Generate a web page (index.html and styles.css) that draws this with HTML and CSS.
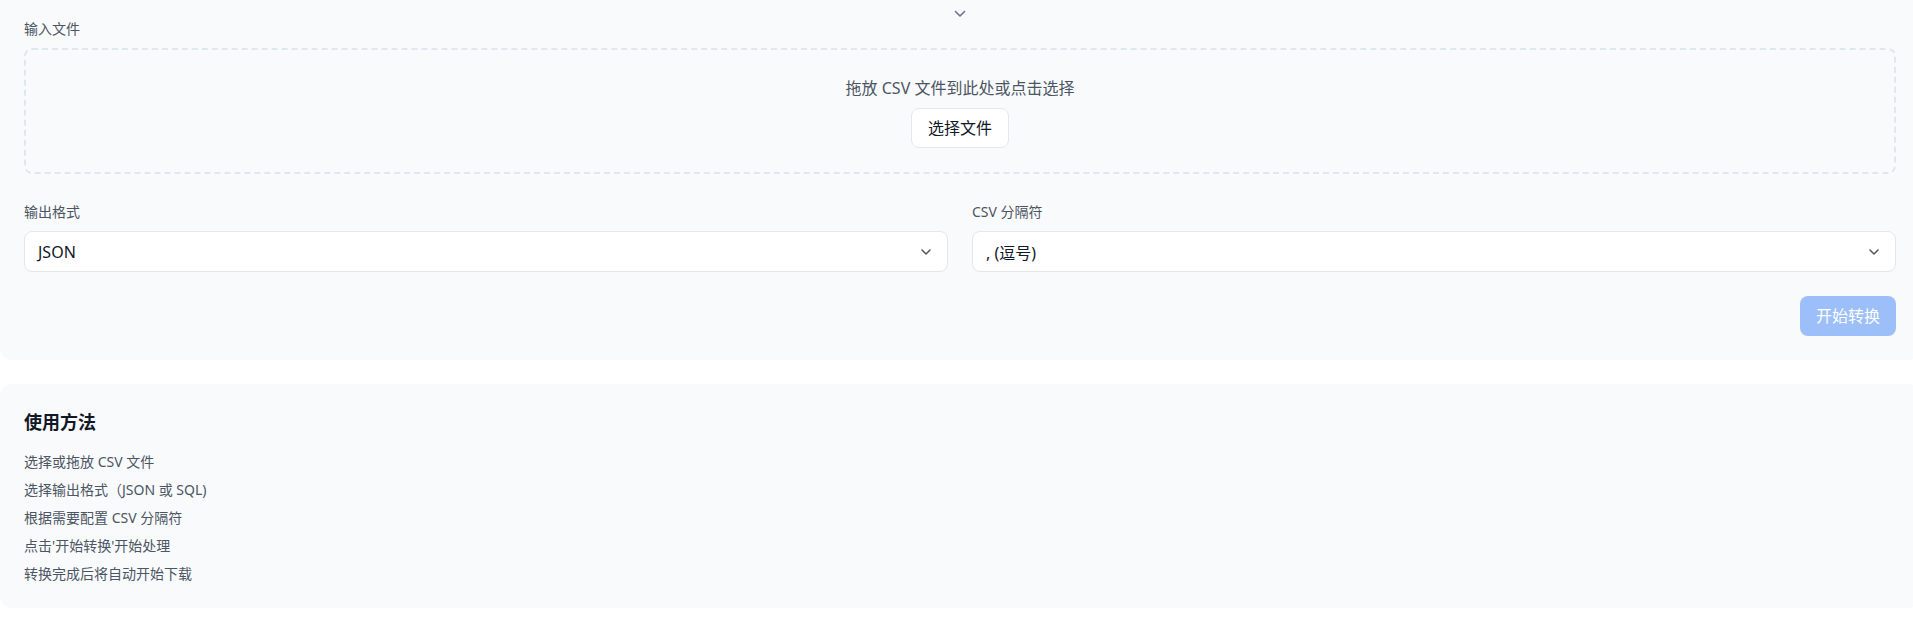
FILE: index.html
```html
<!DOCTYPE html>
<html lang="zh-CN">

<head>
    <meta charset="UTF-8">
    <meta name="viewport" content="width=device-width, initial-scale=1.0">
    <title>CSV 转换工具</title>
    <link rel="stylesheet" href="styles.css">
</head>

<body>
    <div class="page">
        <div class="card convert-card">
            <div class="toggle">
                <svg width="12" height="8" viewBox="0 0 12 8"><path d="M1.5 1.5 L6 6 L10.5 1.5" fill="none" stroke="#64748b" stroke-width="1.6" stroke-linecap="round" stroke-linejoin="round"/></svg>
            </div>

            <label class="field-label">输入文件</label>
            <div class="dropzone">
                <p class="drop-text">拖放 CSV 文件到此处或点击选择</p>
                <button class="btn-file">选择文件</button>
            </div>

            <div class="options">
                <div class="option">
                    <label class="field-label">输出格式</label>
                    <div class="select">
                        <span>JSON</span>
                        <svg width="14" height="14" viewBox="0 0 14 14"><path d="M3 5 L7 9 L11 5" fill="none" stroke="#4b5563" stroke-width="1.5" stroke-linecap="round" stroke-linejoin="round"/></svg>
                    </div>
                </div>
                <div class="option">
                    <label class="field-label">CSV 分隔符</label>
                    <div class="select">
                        <span>, (逗号)</span>
                        <svg width="14" height="14" viewBox="0 0 14 14"><path d="M3 5 L7 9 L11 5" fill="none" stroke="#4b5563" stroke-width="1.5" stroke-linecap="round" stroke-linejoin="round"/></svg>
                    </div>
                </div>
            </div>

            <div class="actions">
                <button class="btn-start" disabled>开始转换</button>
            </div>
        </div>

        <div class="card help-card">
            <h3>使用方法</h3>
            <ul class="steps">
                <li>选择或拖放 CSV 文件</li>
                <li>选择输出格式（JSON 或 SQL)</li>
                <li>根据需要配置 CSV 分隔符</li>
                <li>点击'开始转换'开始处理</li>
                <li>转换完成后将自动开始下载</li>
            </ul>
        </div>
    </div>
</body>

</html>
```

FILE: styles.css
```css
html,
body {
    overflow: hidden;
}

body {
    font-family: "Noto Sans", "Noto Sans CJK SC", sans-serif;
    margin: 0;
    padding: 0;
    background-color: #fff;
    color: #111827;
}

.page {
    width: 1920px;
}

.card {
    background-color: #f9fafb;
    border-radius: 12px;
    padding: 24px;
}

.convert-card {
    padding-top: 0;
    border-top-left-radius: 0;
    border-top-right-radius: 0;
}

.toggle {
    display: flex;
    justify-content: center;
    height: 19px;
    padding-top: 10px;
    box-sizing: border-box;
}

.field-label {
    display: block;
    font-size: 14px;
    line-height: 20px;
    color: #4b5563;
    margin-bottom: 9px;
}

.dropzone {
    border: 2px dashed #e2e6ee;
    border-radius: 8px;
    padding: 24px;
    text-align: center;
}

.drop-text {
    margin: 0 0 6px;
    font-size: 16px;
    line-height: 28px;
    color: #4b5563;
}

.btn-file {
    font-family: inherit;
    font-size: 16px;
    line-height: 24px;
    padding: 7px 16px;
    background-color: #fff;
    color: #111827;
    border: 1px solid #e5e7eb;
    border-radius: 8px;
    cursor: pointer;
}

.options {
    display: grid;
    grid-template-columns: 1fr 1fr;
    gap: 24px;
    margin-top: 28px;
}

.select {
    display: flex;
    justify-content: space-between;
    align-items: center;
    height: 41px;
    box-sizing: border-box;
    padding: 0 14px 0 13px;
    background-color: #fff;
    border: 1px solid #e5e7eb;
    border-radius: 8px;
    font-size: 16px;
    color: #111827;
}

.actions {
    display: flex;
    justify-content: flex-end;
    margin-top: 24px;
}

.btn-start {
    font-family: inherit;
    font-size: 16px;
    line-height: 24px;
    padding: 8px 16px;
    background-color: #9cbef9;
    color: #fff;
    border: none;
    border-radius: 8px;
}

.help-card {
    margin-top: 24px;
}

.help-card h3 {
    margin: 0 0 16px;
    font-size: 18px;
    line-height: 28px;
    font-weight: 700;
    color: #111827;
}

.steps {
    list-style: none;
    margin: 0;
    padding: 0;
}

.steps li {
    font-size: 14px;
    line-height: 20px;
    color: #4b5563;
    margin-bottom: 8px;
}

.steps li:last-child {
    margin-bottom: 0;
}
```
